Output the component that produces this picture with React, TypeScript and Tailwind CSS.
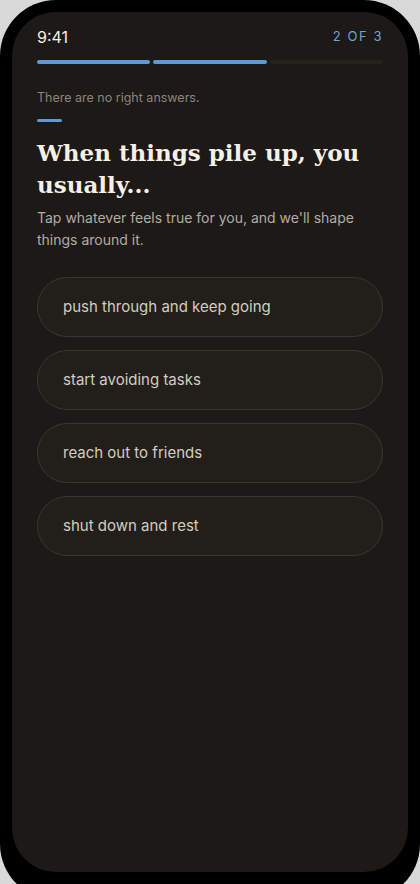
const options = [
  "push through and keep going",
  "start avoiding tasks",
  "reach out to friends",
  "shut down and rest",
];

export default function App() {
  return (
    <div className="h-[884px] w-[420px] overflow-hidden bg-[#d9d9d9]">
      <div className="h-[900px] w-[420px] rounded-[56px] bg-black p-3">
        <div className="flex h-[860px] flex-col rounded-[44px] bg-[#1c1916] px-[25px] pt-[13px] font-['Inter',sans-serif]">
          <div className="flex items-center justify-between">
            <span className="text-[16px] text-[#f4efe8]">9:41</span>
            <span className="text-[13px] tracking-[0.12em] text-[#6fa3d6]">2 OF 3</span>
          </div>

          <div className="mt-[11px] flex gap-[3px]">
            <div className="h-[4px] flex-1 rounded-full bg-[#5e9bd6]" />
            <div className="h-[4px] flex-1 rounded-full bg-[#5e9bd6]" />
            <div className="h-[4px] flex-1 rounded-full bg-[#25221e]" />
          </div>

          <p className="mt-[25px] text-[12.5px] text-[#8c857c]">There are no right answers.</p>
          <div className="mt-[11px] h-[3px] w-[25px] rounded-full bg-[#5e9bd6]" />

          <h1 className="mt-[15px] font-['DejaVu_Serif',serif] text-[23px] font-bold leading-[32px] text-[#f5efe4]">
            When things pile up, you usually...
          </h1>
          <p className="mt-[6px] text-[14px] leading-[22px] text-[#b3aca2]">
            Tap whatever feels true for you, and we'll shape things around it.
          </p>

          <div className="mt-[26px] flex flex-col gap-[13px]">
            {options.map((o) => (
              <button
                key={o}
                className="flex h-[60px] items-center rounded-[30px] border border-[#3a3631] bg-[#221f1b] px-[25px] text-left text-[15px] text-[#d3ccc1]"
              >
                {o}
              </button>
            ))}
          </div>
        </div>
      </div>
    </div>
  );
}
